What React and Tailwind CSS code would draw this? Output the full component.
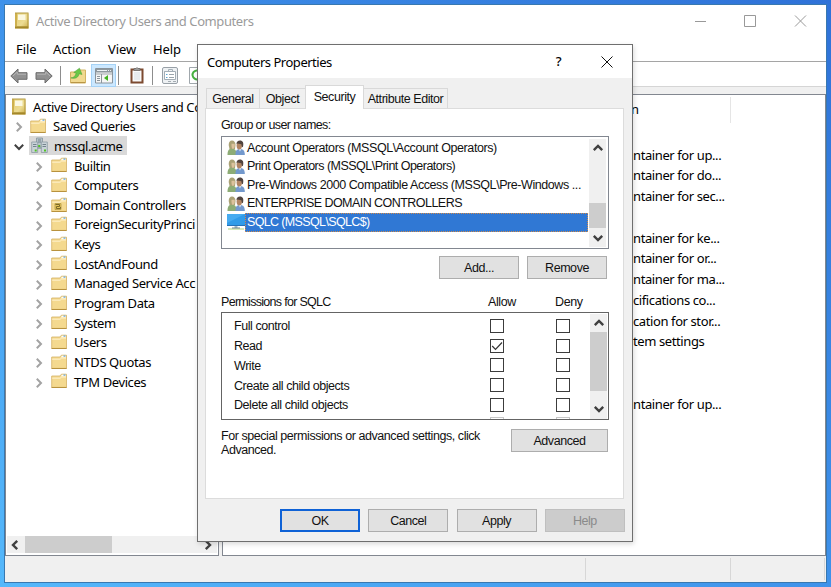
const treeItems = [
  { name: "Builtin" },
  { name: "Computers" },
  { name: "Domain Controllers", ou: true },
  { name: "ForeignSecurityPrinci" },
  { name: "Keys" },
  { name: "LostAndFound" },
  { name: "Managed Service Acc" },
  { name: "Program Data" },
  { name: "System" },
  { name: "Users" },
  { name: "NTDS Quotas" },
  { name: "TPM Devices" },
];

const descriptions = [
  "ntainer for up...",
  "ntainer for do...",
  "ntainer for sec...",
  "",
  "ntainer for ke...",
  "ntainer for or...",
  "ntainer for ma...",
  "cifications co...",
  "cation for stor...",
  "tem settings",
  "",
  "",
  "ntainer for up...",
];

const groups = [
  { name: "Account Operators (MSSQL\\Account Operators)", spacing: "tracking-[-0.41px]" },
  { name: "Print Operators (MSSQL\\Print Operators)", spacing: "tracking-[-0.52px]" },
  { name: "Pre-Windows 2000 Compatible Access (MSSQL\\Pre-Windows ...", spacing: "tracking-[-0.43px]" },
  { name: "ENTERPRISE DOMAIN CONTROLLERS", spacing: "tracking-[-0.54px]" },
];

const permissions = [
  { name: "Full control" },
  { name: "Read", allow: true },
  { name: "Write" },
  { name: "Create all child objects" },
  { name: "Delete all child objects" },
];

function Chevron({ className = "", width = 2 }) {
  return (
    <svg width="14" height="14" viewBox="0 0 14 14" className={`shrink-0 ${className}`}>
      <path d="M4.800 2.800 9 7l-4.200 4.200" fill="none" stroke="currentColor" strokeWidth={width} />
    </svg>
  );
}

function BookIcon() {
  return (
    <svg width="14" height="17" viewBox="0 0 14 17" className="shrink-0">
      <defs>
        <linearGradient id="cover" x1="0" y1="0" x2="1" y2="1">
          <stop offset="0" stopColor="#e3cb6c" />
          <stop offset="0.6" stopColor="#eddc93" />
          <stop offset="1" stopColor="#c9ab45" />
        </linearGradient>
      </defs>
      <path d="M0 1h13.500v15.500H0z" fill="url(#cover)" />
      <path d="M0 1h2v13H0z" fill="#cdb04e" />
      <path d="M0 .500h13.500v1H0z" fill="#b39a45" />
      <path d="M3 2.500h7.500v5.500H3z" fill="#fbf8e2" />
      <path d="M12.500 1.500h1v13h-1z" fill="#b29638" />
      <path d="M0 14.300h13.500v2.200H0z" fill="#a48729" />
    </svg>
  );
}

function FolderIcon({ ou }) {
  return (
    <svg width="17" height="16" viewBox="0 0 17 16" className="shrink-0">
      <path d="M.7 3h8.200l1.500-1.800h5.100v13.200H.7z" fill="#f4d98f" stroke="#d4b163" strokeWidth=".8" />
      <path d="M10.800 1.800h4.200v1.600h-5z" fill="#fffdf2" />
      <path d="M12.500 1.600h2v1h-2z" fill="#3e8ed8" />
      <path d="M1.200 4.500h8l1-1h4.800v1.300H10.200L9.200 6H1.200z" fill="#fbe9b8" />
      <path d="M.6 14.500h15" stroke="#b8923e" strokeWidth="1" />
      {ou && (
        <>
          <path d="M4 6.500h6v6H4z" fill="#e5c458" stroke="#b59a45" strokeWidth=".8" />
          <path d="M4.500 7.500h4v2h-3v2h4v-1.500" fill="none" stroke="#7d6a28" />
        </>
      )}
    </svg>
  );
}

function DomainIcon() {
  return (
    <svg width="17" height="17" viewBox="0 0 17 17" className="shrink-0">
      <path d="M5.5 1h6v9h-6z" fill="#b8c4cb" stroke="#84949d" strokeWidth=".8" />
      <path d="M.7 5h6v10.5h-6z" fill="#c9d3d8" stroke="#8b9aa2" strokeWidth=".8" />
      <path d="M10.3 5h6v10.5h-6z" fill="#c9d3d8" stroke="#8b9aa2" strokeWidth=".8" />
      <path d="M7 3h3M7 5h3M2 7.500h3.500M2 9.500h3.500M11.500 7.500H15M11.500 9.500H15" stroke="#73848d" />
      <path d="M6.500 11h4" stroke="#8d9ca4" strokeWidth="1.500" />
      <path d="M7.200 8h2v2h-2zM3.700 12.500h2v2h-2zM13 12.500h2v2h-2z" fill="#51c423" />
    </svg>
  );
}

function ArrowIcon({ flip }) {
  return (
    <svg width="18" height="16" viewBox="0 0 18 16" className={flip ? "shrink-0 -scale-x-100" : "shrink-0"}>
      <path d="M.8 8 8 1v3.700h9v6.600H8V15z" fill="#919191" stroke="#6c6c6c" />
      <path d="M3 8 7.300 4v2.200H16" fill="none" stroke="#b5b5b5" />
    </svg>
  );
}

function UpFolderIcon() {
  return (
    <svg width="16" height="17" viewBox="0 0 16 17" className="shrink-0">
      <path d="M.5 5h7l2-2h6v13H.5z" fill="#f1d98f" stroke="#d3b463" />
      <path d="M1 15.500h14" stroke="#b99545" />
      <path d="M2 12.500c3-.8 4-3 4-6H3.500L8 1l4 5.500H9c0 4-2 6-7 6z" fill="#6bc847" stroke="#4a9f38" strokeWidth=".5" transform="rotate(14 8 7)" />
    </svg>
  );
}

function PaneIcon() {
  return (
    <svg width="18" height="16" viewBox="0 0 18 16" className="shrink-0">
      <path d="M.5.500h17v14.500H.5z" fill="#f6f6f6" stroke="#8a949c" />
      <path d="M1 1h16v3.500H1z" fill="#8f999f" />
      <path d="M2 2.500h10M13 2.500h1M15 2.500h1" stroke="#eef3f6" />
      <path d="M1 6h16" stroke="#a1a9ae" />
      <path d="M6.500 6v9M2 8.500h3M2 10.500h3M2 12.500h3" stroke="#8d969c" />
      <path d="M13 7v6l-4-3z" fill="#42b321" />
    </svg>
  );
}

function ClipboardIcon() {
  return (
    <svg width="14" height="17" viewBox="0 0 14 17" className="shrink-0">
      <path d="M1.500 2.500h11v13h-11z" fill="#fafafa" stroke="#7d4a30" strokeWidth="2" />
      <path d="M4 3.500V1.500h2L7 .5l1 1h2v2z" fill="#9b9b9b" stroke="#666" strokeWidth=".7" />
      <path d="M4 6h6M4 8h6M4 10h6M4 12h6" stroke="#c4d0d8" strokeWidth=".7" />
    </svg>
  );
}

function PropertiesIcon() {
  return (
    <svg width="16" height="17" viewBox="0 0 16 17" className="shrink-0">
      <rect x=".5" y=".5" width="15" height="16" rx="1.5" fill="#eef1f3" stroke="#98a0a7" />
      <path d="M2.500 4.500h11v8h-11z" fill="#fff" stroke="#a3adb5" />
      <path d="M2.500 4.500h4v-2h4v2" fill="none" stroke="#a5b0b8" />
      <path d="M4 7.500h1.500M4 10.500h1.500" stroke="#5ea6d2" />
      <path d="M7 7.500h5M7 10.500h5" stroke="#9aa4ab" />
      <path d="M6 14.500h3M11 14.500h3" stroke="#a6adb3" />
    </svg>
  );
}

function RefreshIcon() {
  return (
    <svg width="16" height="17" viewBox="0 0 16 17" className="shrink-0">
      <path d="M.5.500h15v16H.5z" fill="#fff" stroke="#a0a7ac" />
      <path d="M11 4.500A4.500 4.500 0 1 0 12 10" fill="none" stroke="#45b03f" strokeWidth="2" />
    </svg>
  );
}

function PeopleIcon() {
  return (
    <svg width="18" height="16" viewBox="0 0 18 16" className="shrink-0">
      <path d="M.5 15c0-4 1-6.500 4.500-6.500S9.500 11 9.500 15z" fill="#8dac76" />
      <path d="M1.700 5c0-3 1.300-4.500 3.300-4.500S8.500 2 8.500 5L8 9H2.500z" fill="#aaa175" />
      <path d="M4.500 3.800h3.200c.4 3-.5 5-1.800 5.200-1-.2-1.600-2-1.400-5.200z" fill="#dcc29c" />
      <path d="M8.500 15c-.2-4 1-6 4.500-6s4.800 2 4.800 6z" fill="#7399cd" />
      <path d="M11.500 8.500h3l-1.500 3z" fill="#e6eef6" />
      <ellipse cx="12.300" cy="5.500" rx="2.700" ry="4" fill="#b08463" />
      <path d="M9.500 4c0-2.300 1.300-3.500 3.500-3.500 2.700 0 4 2.200 3 6.300l-1 .5-.7-3-3.800-.8z" fill="#50433e" />
    </svg>
  );
}

function MonitorIcon() {
  return (
    <svg width="18" height="16" viewBox="0 0 18 16" className="shrink-0">
      <path d="M0 0h18v12H0z" fill="#319be8" />
      <path d="M0 0h18L0 9z" fill="#46abf0" />
      <path d="M0 11.500h18" stroke="#2672b8" />
      <path d="M7.500 12h3v2h-3z" fill="#9eb8c4" />
      <path d="M1 15h16" stroke="#bcd78c" strokeWidth="1.200" />
      <path d="M5 14h8" stroke="#71858e" />
    </svg>
  );
}

function Checkbox({ checked }) {
  return (
    <span className="flex size-[14px] items-center justify-center border border-[#3c3c3c] bg-white">
      {checked && (
        <svg width="12" height="12" viewBox="0 0 12 12">
          <path d="m1.200 6 3.300 3.300L11 2.500" fill="none" stroke="#333" strokeWidth="1.200" />
        </svg>
      )}
    </span>
  );
}

function Button({ children, className = "" }) {
  return (
    <button className={`flex h-[23px] shrink-0 items-center justify-center border pt-px ${className}`}>
      {children}
    </button>
  );
}

function Tree() {
  return (
    <div className="flex h-[462px] w-[214px] flex-col border border-[#828790] bg-white">
      <div className="flex h-[441px] flex-col overflow-hidden pt-[1.500px] whitespace-nowrap">
        <div className="flex h-[19.65px] shrink-0 items-center pl-[6px]">
          <BookIcon />
          <span className="ml-[7px] pt-[2px]">Active Directory Users and Co</span>
        </div>
        <div className="flex h-[19.65px] shrink-0 items-center pl-[6px]">
          <Chevron className="mt-[3px] text-[#a3a3a3]" />
          <span className="ml-[4px]"><FolderIcon /></span>
          <span className="ml-[6px] pt-[2px]">Saved Queries</span>
        </div>
        <div className="flex h-[19.65px] shrink-0 items-center pl-[6px]">
          <Chevron className="mt-[2px] rotate-90 text-[#404040]" />
          <div className="ml-[3px] flex h-full w-[98px] items-center bg-[#d9d9d9] pl-[2px]">
            <DomainIcon />
            <span className="ml-[6px] pt-[2px]">mssql.acme</span>
          </div>
        </div>
        {treeItems.map((item) => (
          <div key={item.name} className="flex h-[19.65px] shrink-0 items-center pl-[26px]">
            <Chevron className="mt-[3px] text-[#a3a3a3]" />
            <span className="ml-[5px]"><FolderIcon ou={item.ou} /></span>
            <span className="ml-[6px] pt-[2px]">{item.name}</span>
          </div>
        ))}
      </div>
      <div className="mx-px flex h-[17px] items-center justify-between bg-[#f0f0f0]">
        <Chevron className="ml-[1px] rotate-180 text-[#404040]" width={2.400} />
        <div className="mr-auto ml-[3px] h-full w-[87px] bg-[#cdcdcd]" />
        <Chevron className="mr-[2px] text-[#404040]" width={2.400} />
      </div>
    </div>
  );
}

function MainWindow() {
  return (
    <div className="flex h-[579px] w-[823px] flex-col border border-[#3878b0] bg-[#f0f0f0] font-['Noto_Sans','Open_Sans',sans-serif] text-[13px] tracking-[-0.4px] text-black">
      <div className="flex h-[31px] items-center bg-white pl-[10px] text-[#9b9b9b]">
        <BookIcon />
        <span className="ml-[7px] pt-[2px] whitespace-nowrap">Active Directory Users and Computers</span>
        <svg width="112" height="12" viewBox="0 0 112 12" fill="none" stroke="#999" className="mr-[19px] ml-auto">
          <path d="M0 6.500h11M49.500.5h11v11h-11zM100 .500l11 11M111 .500l-11 11" />
        </svg>
      </div>
      <div className="flex h-[26px] items-center border-b border-[#a5a5a5] bg-white pt-[2px] pl-[11px] tracking-[-0.1px]">
        <span className="w-[37px]">File</span>
        <span className="w-[55px]">Action</span>
        <span className="w-[45px]">View</span>
        <span>Help</span>
      </div>
      <div className="flex h-[25px] items-center border-b border-[#d5d5d5] bg-white pt-[3px] pl-[5px]">
        <ArrowIcon />
        <span className="ml-[7px]"><ArrowIcon flip /></span>
        <span className="ml-[7px] h-[19px] w-px bg-[#8d8d8d]" />
        <span className="ml-[9px]"><UpFolderIcon /></span>
        <span className="ml-[5px] flex h-[23px] w-[25px] items-center justify-center border border-[#a5d2f6] bg-[#cce8ff]">
          <PaneIcon />
        </span>
        <span className="ml-[2px] h-[19px] w-px bg-[#8d8d8d]" />
        <span className="ml-[11px]"><ClipboardIcon /></span>
        <span className="ml-[8px] h-[19px] w-px bg-[#8d8d8d]" />
        <span className="ml-[9px]"><PropertiesIcon /></span>
        <span className="ml-[11px]"><RefreshIcon /></span>
      </div>
      <div className="mt-[7px] flex justify-between">
        <Tree />
        <div className="h-[462px] w-[604px] border border-[#828790] bg-white">
          <div className="flex h-[29px] items-center pt-px pl-[408px]">
            <span className="w-[99px]">n</span>
            <span className="h-[26px] w-px bg-[#e5e5e5]" />
          </div>
          <div className="flex flex-col pt-[20.500px] pl-[410px]">
            {descriptions.map((text, i) => (
              <span key={i} className="h-[20.75px] leading-[20.75px] whitespace-nowrap">{text}</span>
            ))}
          </div>
        </div>
      </div>
      <div className="flex flex-1 justify-end py-[2px] pr-[1px]">
        <div className="w-[145px] border-l border-[#d7d7d7]" />
        <div className="w-[95px] border-r border-l border-[#d7d7d7]" />
      </div>
    </div>
  );
}

function GroupList() {
  return (
    <div className="flex h-[113px] w-[388px] border border-[#828790] bg-white pt-[2px] pr-[2px]">
      <div className="flex flex-1 flex-col pl-[5px]">
        {groups.map((group) => (
          <div key={group.name} className="flex h-[18.500px] items-center">
            <PeopleIcon />
            <span className={`ml-[2px] whitespace-nowrap ${group.spacing}`}>{group.name}</span>
          </div>
        ))}
        <div className="flex h-[18.500px] items-center">
          <MonitorIcon />
          <div className="flex h-full w-[343px] items-center border border-dotted border-[#d08a4a] bg-[#3078d4] pl-px text-white">
            <span className="tracking-[-0.64px] whitespace-nowrap">SQLC (MSSQL\SQLC$)</span>
          </div>
        </div>
      </div>
      <div className="flex h-[108px] w-[17px] flex-col items-center bg-[#f0f0f0]">
        <Chevron className="mt-[2px] -rotate-90 text-[#404040]" width={2.400} />
        <div className="mt-[48px] h-[25px] w-full bg-[#cdcdcd]" />
        <Chevron className="mt-[3px] rotate-90 text-[#404040]" width={2.400} />
      </div>
    </div>
  );
}

function PermissionList() {
  return (
    <div className="flex h-[108px] w-[388px] overflow-hidden border border-[#646464] bg-white pt-px pr-px">
      <div className="flex-1 pt-[2px] pl-[12px]">
        {permissions.map((perm) => (
          <div key={perm.name} className="flex h-[19.700px] items-center">
            <span className="w-[256px] pt-[2px]">{perm.name}</span>
            <Checkbox checked={perm.allow} />
            <span className="ml-[52px]"><Checkbox /></span>
          </div>
        ))}
        <div className="flex pt-[3px] pl-[256px]">
          <span className="size-[14px] shrink-0 border border-[#c8c8c8]" />
          <span className="ml-[52px] size-[14px] shrink-0 border border-[#c8c8c8]" />
        </div>
      </div>
      <div className="flex h-[105px] w-[17px] flex-col items-center bg-[#f0f0f0]">
        <Chevron className="mt-[2px] -rotate-90 text-[#404040]" width={2.400} />
        <div className="mt-[2px] h-[59px] w-full bg-[#cdcdcd]" />
        <Chevron className="mt-[11px] rotate-90 text-[#404040]" width={2.400} />
      </div>
    </div>
  );
}

function PropertiesDialog() {
  return (
    <div className="absolute top-[44px] left-[197px] h-[498px] w-[436px] border border-[#6f6f6f] bg-[#f0f0f0] font-['Liberation_Sans',Arial,sans-serif] text-[12.5px] tracking-[-0.44px] text-[#111] shadow-[1px_2px_5px_rgba(0,0,0,0.15)]">
      <div className="flex h-[33px] items-center bg-white pl-[9px] font-['Noto_Sans','Open_Sans',sans-serif] text-[13px] tracking-[-0.48px] text-black">
        <span className="pt-[2px]">Computers Properties</span>
        <span className="mr-[40px] ml-auto font-medium">?</span>
        <svg width="12" height="12" viewBox="0 0 12 12" stroke="#111" className="mr-[19px]">
          <path d="m.5.500 11 11M11.500.500l-11 11" />
        </svg>
      </div>
      <div className="flex h-[30px] items-end pl-[8px]">
        <span className="flex h-[20px] w-[54px] items-center justify-center border border-b-0 border-[#d9d9d9] pt-[2px]">General</span>
        <span className="flex h-[20px] w-[45px] items-center justify-center border-t border-[#d9d9d9] pt-[2px]">Object</span>
        <span className="z-10 -mb-px flex h-[24px] w-[59px] items-center justify-center border border-b-0 border-[#d9d9d9] bg-white">Security</span>
        <span className="flex h-[20px] w-[84px] items-center justify-center border-t border-r border-[#d9d9d9] pt-[2px]">Attribute Editor</span>
      </div>
      <div className="ml-[7px] h-[391px] w-[419px] border border-[#dcdcdc] bg-white pt-[8px] pl-[15px]">
        <p className="h-[19px] pl-px leading-[17px] tracking-[-0.6px]">
          <span className="-ml-px">Group or user names:</span>
        </p>
        <GroupList />
        <div className="mt-[7px] flex gap-[8px] pl-[218px]">
          <Button className="w-[80px] border-[#adadad] bg-[#e1e1e1]">Add...</Button>
          <Button className="w-[80px] border-[#adadad] bg-[#e1e1e1]">Remove</Button>
        </div>
        <div className="mt-[13px] flex h-[20px] leading-[21px] tracking-[-0.7px]">
          <span className="w-[267px]">Permissions for SQLC</span>
          <span className="w-[67px] tracking-[-0.4px]">Allow</span>
          <span className="tracking-[-0.4px]">Deny</span>
        </div>
        <PermissionList />
        <div className="mt-[9px] flex">
          <p className="w-[290px] leading-[14px]">
            For special permissions or advanced settings, click
            <br />
            Advanced.
          </p>
          <Button className="w-[97px] border-[#adadad] bg-[#e1e1e1]">Advanced</Button>
        </div>
      </div>
      <div className="mt-[10px] flex gap-[8.300px] pl-[82px]">
        <Button className="w-[80px] border-2 border-[#0f62d6] bg-[#e1e1e1]">OK</Button>
        <Button className="w-[80px] border-[#adadad] bg-[#e1e1e1]">Cancel</Button>
        <Button className="w-[80px] border-[#adadad] bg-[#e1e1e1]">Apply</Button>
        <Button className="w-[80px] border-[#bfbfbf] bg-[#cccccc] text-[#8a8a8a]">Help</Button>
      </div>
    </div>
  );
}

export default function App() {
  return (
    <main className="relative h-[587px] w-[831px] overflow-hidden bg-linear-to-tr from-[#55b8fb] via-[#3f92ea] to-[#2f72d8] pt-[4px] pl-[4px]">
      <MainWindow />
      <PropertiesDialog />
    </main>
  );
}
